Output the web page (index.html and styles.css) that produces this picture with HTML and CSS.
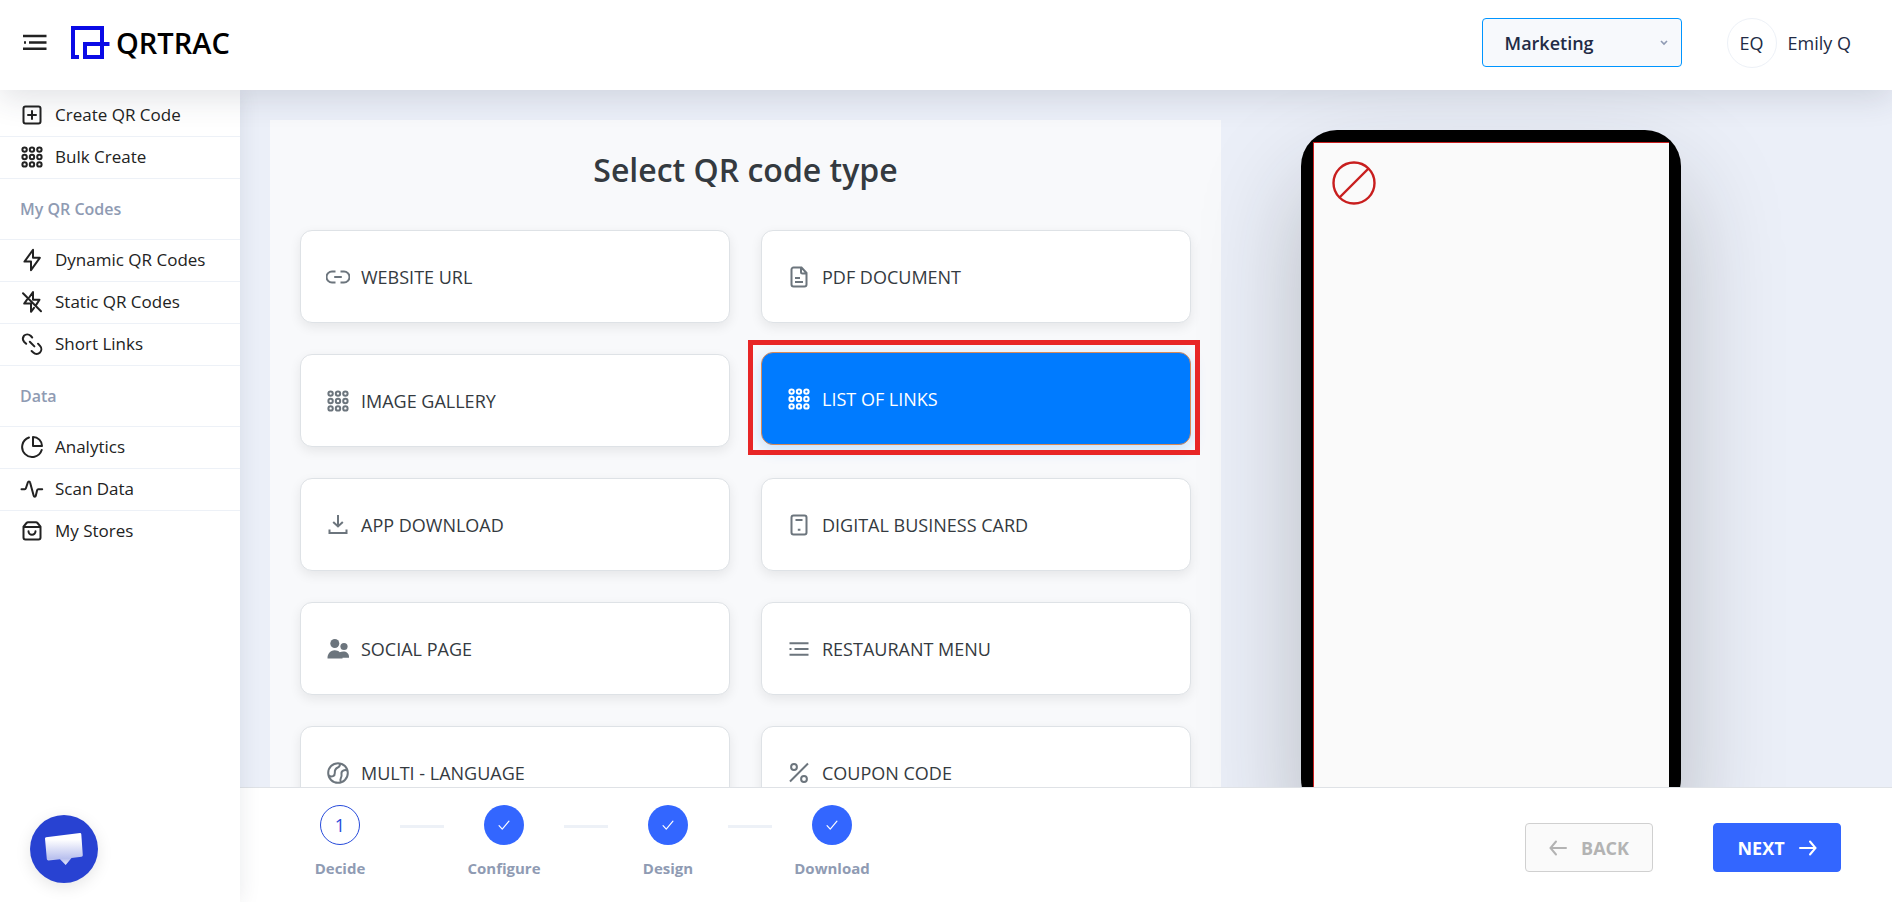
FILE: index.html
```html
<!DOCTYPE html>
<html lang="en">
<head>
  <meta charset="UTF-8">
  <title>QRTRAC - Create QR Code</title>
  <link rel="stylesheet" href="styles.css">
</head>
<body>
  <!-- shared icons -->
  <svg class="sprite" aria-hidden="true">
    <symbol id="i-grid" viewBox="0 0 24 24">
      <g fill="none" stroke="currentColor" stroke-width="2">
        <circle cx="4.6" cy="4.6" r="2.2"/><circle cx="12" cy="4.6" r="2.2"/><circle cx="19.4" cy="4.6" r="2.2"/>
        <circle cx="4.6" cy="12" r="2.2"/><circle cx="12" cy="12" r="2.2"/><circle cx="19.4" cy="12" r="2.2"/>
        <circle cx="4.6" cy="19.4" r="2.2"/><circle cx="12" cy="19.4" r="2.2"/><circle cx="19.4" cy="19.4" r="2.2"/>
      </g>
    </symbol>
    <symbol id="i-menu" viewBox="0 0 24 24">
      <path fill="none" stroke="currentColor" stroke-width="2" d="M2.5 6.2h19M7.5 12h14M2.5 17.8h19M2.5 12h2"/>
    </symbol>
    <symbol id="i-check" viewBox="0 0 24 24">
      <path fill="none" stroke="currentColor" stroke-width="2" stroke-linecap="round" stroke-linejoin="round" d="M3.5 13l5.500 6L20.500 5.500"/>
    </symbol>
  </svg>

  <header class="topbar">
    <button class="menu-toggle" type="button" aria-label="Toggle menu">
      <svg viewBox="0 0 24 18"><path fill="none" stroke="currentColor" stroke-width="2.400" d="M0 2h23.500M6 8.500h17.500M0 14.800h23.500M1 8.500h2"/></svg>
    </button>
    <a class="brand" href="#">
      <svg viewBox="0 0 40 36"><path fill="none" stroke="currentColor" stroke-width="4" d="M9 32H3V3h29v29H15V19h24.500"/></svg>
      <span>QRTRAC</span>
    </a>
    <div class="workspace">
      <select aria-label="Workspace">
        <option>Marketing</option>
      </select>
      <svg viewBox="0 0 8 6"><path fill="none" stroke="currentColor" stroke-width="1.600" d="M1 1l3 3 3-3"/></svg>
    </div>
    <a class="user" href="#">
      <span class="avatar">EQ</span>
      <span>Emily Q</span>
    </a>
  </header>

  <div class="layout">
    <nav class="sidebar">
      <ul>
        <li><a href="#">
          <svg viewBox="0 0 24 24"><rect x="3.500" y="3.500" width="17" height="17" rx="2"/><path d="M12 8v8M8 12h8"/></svg>
          Create QR Code</a></li>
        <li><a href="#"><svg><use href="#i-grid"/></svg>Bulk Create</a></li>
        <li class="heading">My QR Codes</li>
        <li><a href="#">
          <svg viewBox="0 0 24 24"><path d="M13 1.800L4.500 13.600H11V22.200L19.800 9.800H13z"/></svg>
          Dynamic QR Codes</a></li>
        <li><a href="#">
          <svg viewBox="0 0 24 24"><path d="M9.500 7l3.500-5v7.800h6.500l-3 4.600M7 9.600l-2.800 4H11v8.200l3-4M3 3.200l18 18"/></svg>
          Static QR Codes</a></li>
        <li><a href="#">
          <svg viewBox="0 0 24 24"><path d="M6.200 11.800L4 9.700A4.900 4.900 0 0 1 3.900 3.800a4.900 4.900 0 0 1 6.700 0l1.600 1.700M9.800 9.800l4.600 4.600M18 11.700l2 2.200a4.900 4.900 0 0 1 0 6.700 4.900 4.900 0 0 1-6.700 0L11.600 19"/></svg>
          Short Links</a></li>
        <li class="heading">Data</li>
        <li><a href="#">
          <svg viewBox="0 0 24 24"><path d="M9 2.500A10 10 0 1 0 21.700 15M13 2v9h9a9 9 0 0 0-9-9z"/></svg>
          Analytics</a></li>
        <li><a href="#">
          <svg viewBox="0 0 24 24"><path d="M1.500 12.300h3.200c.6 0 1-.4 1.200-1l2-6c.4-1.200 1.800-1.200 2.100 0l3.700 13.500c.3 1.200 1.800 1.200 2.100 0l1.300-5.500c.2-.7.600-1 1.200-1h3.900"/></svg>
          Scan Data</a></li>
        <li><a href="#">
          <svg viewBox="0 0 24 24"><path d="M3.500 7.700L6.500 4q.6-.7 1.500-.7h8q.9 0 1.500.7l3 3.700v10.800a2 2 0 0 1-2 2h-13a2 2 0 0 1-2-2zM3.500 8h17M8.500 12.300a3.500 3.500 0 0 0 7 0"/></svg>
          My Stores</a></li>
      </ul>
      <button class="chat" type="button" aria-label="Open chat">
        <svg viewBox="0 0 40 34">
          <defs>
            <linearGradient id="bubble" x1="0" y1="0" x2="0" y2="1">
              <stop offset=".2" stop-color="#fff"/>
              <stop offset=".8" stop-color="#b9c0ee"/>
              <stop offset="1" stop-color="#e4e7fa"/>
            </linearGradient>
          </defs>
          <path fill="url(#bubble)" d="M2 5.200L36 1q1.200 0 1.300 1.200l1.500 21q0 1.400-1.300 1.500L27.500 26 21.700 33 16 27.200 4.400 28.400Q3 28.400 2.800 27L1 6.600Q1 5.400 2 5.200z"/>
        </svg>
      </button>
    </nav>

    <div class="main">
      <main class="content">
        <section class="panel">
          <h1>Select QR code type</h1>
          <div class="types">
            <button class="type" type="button">
              <svg viewBox="0 0 24 24"><path d="M9.500 6.500H6a5.300 5.300 0 0 0 0 11h3.500M14.500 6.500H18a5.300 5.300 0 0 1 0 11h-3.500M8.200 12h7.600"/></svg>
              WEBSITE URL
            </button>
            <button class="type" type="button">
              <svg viewBox="0 0 24 24"><path d="M14.500 2.500h-8a2 2 0 0 0-2 2v15a2 2 0 0 0 2 2h11a2 2 0 0 0 2-2V8zM14 2.500V7q0 1.500 1.500 1.500h4M8 13h5M8 17h8"/></svg>
              PDF DOCUMENT
            </button>
            <button class="type" type="button">
              <svg><use href="#i-grid"/></svg>
              IMAGE GALLERY
            </button>
            <button class="type selected" type="button">
              <svg><use href="#i-grid"/></svg>
              LIST OF LINKS
              <span class="marker"></span>
            </button>
            <button class="type" type="button">
              <svg viewBox="0 0 24 24"><path d="M12 2v11M7.200 9l4.800 4.500L16.800 9M3.500 16.500V20h17v-3.500"/></svg>
              APP DOWNLOAD
            </button>
            <button class="type" type="button">
              <svg viewBox="0 0 24 24"><rect x="4.500" y="2.500" width="15" height="19" rx="2"/><path d="M8.500 7h7M10.800 16.800h2.600" /></svg>
              DIGITAL BUSINESS CARD
            </button>
            <button class="type" type="button">
              <svg class="solid" viewBox="0 0 24 24"><circle cx="8.800" cy="6.500" r="4.500"/><circle cx="18" cy="9.500" r="3.600"/><path d="M1.500 21.500C1.500 17 4 13.300 8.700 13.300c2 0 3.800.7 5 1.900 5-2 9.300.3 9.300 4.300v1.200h-6.500v.8z"/></svg>
              SOCIAL PAGE
            </button>
            <button class="type" type="button">
              <svg><use href="#i-menu"/></svg>
              RESTAURANT MENU
            </button>
            <button class="type" type="button">
              <svg viewBox="0 0 24 24"><circle cx="12" cy="12" r="9.800"/><path d="M2.500 14.500c3.500 2 6.500.5 6.300-2.500-.2-3 .4-4.400 3-5.500 2-.9 2.500-2 2-4M21.500 9.500c-3-1.200-6.500.3-6 3.500.3 1.700.3 2.500-.6 4-.8 1.400-.8 2.700.1 4"/></svg>
              MULTI - LANGUAGE
            </button>
            <button class="type" type="button">
              <svg viewBox="0 0 24 24"><circle cx="7" cy="6" r="2.900"/><circle cx="17" cy="18" r="2.900"/><path d="M21 2.500l-18 18"/></svg>
              COUPON CODE
            </button>
          </div>
        </section>
        <aside class="preview">
          <div class="phone">
            <div class="screen">
              <svg viewBox="0 0 44 44"><circle cx="22" cy="22" r="20.500"/><path d="M7.500 36.500l29-29"/></svg>
            </div>
          </div>
        </aside>
      </main>

      <footer class="wizard">
        <ol class="steps">
          <li class="step current"><span class="dot">1</span>Decide</li>
          <li class="line"></li>
          <li class="step"><span class="dot"><svg><use href="#i-check"/></svg></span>Configure</li>
          <li class="line"></li>
          <li class="step"><span class="dot"><svg><use href="#i-check"/></svg></span>Design</li>
          <li class="line"></li>
          <li class="step"><span class="dot"><svg><use href="#i-check"/></svg></span>Download</li>
        </ol>
        <div class="actions">
          <button class="btn" type="button" disabled>
            <svg viewBox="0 0 18 16"><path d="M17 8H2M7 1.500L1.500 8 7 14.500"/></svg>
            BACK
          </button>
          <button class="btn next" type="button">
            NEXT
            <svg viewBox="0 0 18 16"><path d="M1 8h15M11 1.500L16.500 8 11 14.500"/></svg>
          </button>
        </div>
      </footer>
    </div>
  </div>
</body>
</html>
```
FILE: styles.css
```css
* {
  box-sizing: border-box;
}
body {
  margin: 0;
  height: 100vh;
  display: flex;
  flex-direction: column;
  overflow: hidden;
  background: #ebeff8;
  font-family: "Open Sans", "Noto Sans", sans-serif;
  font-size: 18px;
  color: #222b45;
}
button,
select {
  font: inherit;
  cursor: pointer;
}
a {
  color: inherit;
  text-decoration: none;
}
ul,
ol {
  list-style: none;
  margin: 0;
  padding: 0;
}
.sprite {
  display: none;
}

/* top bar */
.topbar {
  position: relative;
  z-index: 3;
  display: flex;
  align-items: center;
  height: 90px;
  flex: none;
  padding: 0 41px 5px 23px;
  background: #fff;
  box-shadow: 0 8px 32px rgba(44, 51, 73, 0.14);
}
.menu-toggle {
  padding: 0;
  border: 0;
  background: none;
  color: #222;
  display: flex;
}
.menu-toggle svg {
  width: 24px;
  height: 18px;
}
.brand {
  display: flex;
  align-items: center;
  gap: 6px;
  margin-left: 23px;
  color: #000;
  font-size: 29px;
  font-weight: 600;
}
.brand svg {
  width: 40px;
  height: 36px;
  color: #0a0ae6;
}
.workspace {
  position: relative;
  margin-left: auto;
}
.workspace select {
  appearance: none;
  width: 200px;
  height: 49px;
  padding: 0 22px;
  border: 1px solid #0095ff;
  border-radius: 4px;
  background: #f7f9fc;
  color: #222b45;
  font-weight: 600;
}
.workspace svg {
  position: absolute;
  right: 14px;
  top: 22px;
  width: 8px;
  height: 6px;
  color: #8f9bb3;
  pointer-events: none;
}
.user {
  display: flex;
  align-items: center;
  gap: 11px;
  margin-left: 45px;
}
.avatar {
  width: 50px;
  height: 50px;
  display: flex;
  align-items: center;
  justify-content: center;
  border: 1px solid #edf1f7;
  border-radius: 50%;
}

/* sidebar */
.layout {
  display: flex;
  flex: 1;
  min-height: 0;
}
.sidebar {
  position: relative;
  z-index: 2;
  width: 240px;
  flex: none;
  display: flex;
  flex-direction: column;
  justify-content: space-between;
  padding: 5px 0 19px;
  background: #fff;
  box-shadow: 0 0 20px rgba(44, 51, 73, 0.1);
  color: #222;
  font-size: 17px;
}
.sidebar li {
  border-bottom: 1px solid #edf1f7;
}
.sidebar li:last-child {
  border-bottom: 0;
}
.sidebar a {
  display: flex;
  align-items: center;
  gap: 11px;
  height: 41px;
  padding: 0 20px 2px;
}
.sidebar a svg {
  width: 24px;
  height: 24px;
  fill: none;
  stroke: currentColor;
  stroke-width: 2;
  stroke-linecap: round;
  stroke-linejoin: round;
}
.sidebar .heading {
  height: 61px;
  padding: 0 20px;
  line-height: 60px;
  color: #8f9bb3;
  font-size: 16px;
  font-weight: 600;
}
.chat {
  width: 68px;
  height: 68px;
  margin-left: 30px;
  display: flex;
  align-items: center;
  justify-content: center;
  border: 0;
  border-radius: 50%;
  background: #2842d2;
  box-shadow: 0 4px 16px rgba(0, 0, 0, 0.1);
}
.chat svg {
  width: 40px;
  height: 34px;
}

/* content */
.main {
  flex: 1;
  min-width: 0;
  display: flex;
  flex-direction: column;
}
.content {
  flex: 1;
  min-height: 0;
  overflow: hidden;
  display: grid;
  grid-template-columns: 3fr 2fr;
  align-items: start;
  padding: 30px 37px 0 30px;
}
.panel {
  padding: 30px;
  background: #f8f9fb;
}
.panel h1 {
  margin: 0 0 40px;
  color: #343a40;
  font-size: 32px;
  font-weight: 600;
  line-height: 40px;
  text-align: center;
}
.types {
  display: grid;
  grid-template-columns: 1fr 1fr;
  gap: 31px;
}
.type {
  position: relative;
  display: flex;
  align-items: center;
  gap: 11px;
  height: 93px;
  padding: 0 25px;
  border: 1px solid #dee2e6;
  border-radius: 12px;
  background: #fff;
  box-shadow: 0 4px 12px rgba(0, 0, 0, 0.08);
  color: #343a40;
}
.type svg {
  width: 24px;
  height: 24px;
  fill: none;
  stroke: currentColor;
  stroke-width: 2;
  color: #6c757d;
}
.type .solid {
  fill: currentColor;
  stroke: none;
}
.type.selected {
  transform: translateY(-2px);
  border-color: #d98a57;
  background: #007bff;
  box-shadow: 0 4px 16px rgba(0, 123, 255, 0.2);
  color: #fff;
}
.type.selected svg {
  color: #fff;
}
.marker {
  position: absolute;
  inset: -13px -10px -11px -14px;
  border: 5px solid #e82626;
}

/* phone preview */
.preview {
  padding-left: 80px;
}
.phone {
  max-width: 380px;
  height: 685px;
  margin-top: 10px;
  padding: 12px;
  border-radius: 36px;
  background: #000;
  box-shadow: 0 50px 100px rgba(30, 35, 40, 0.25);
}
.screen {
  height: 100%;
  padding: 18px;
  border-top: 1px solid #c81e1e;
  border-left: 1px solid #c81e1e;
  background: #fafafa;
}
.screen svg {
  width: 44px;
  height: 44px;
  fill: none;
  stroke: #c81e1e;
  stroke-width: 2.4;
}

/* wizard footer */
.wizard {
  display: flex;
  align-items: flex-start;
  justify-content: space-between;
  height: 115px;
  flex: none;
  padding: 17px 51px 0 40px;
  border-top: 1px solid #dfe2e6;
  background: #fff;
}
.steps {
  display: flex;
}
.step {
  width: 120px;
  display: flex;
  flex-direction: column;
  align-items: center;
  gap: 12px;
  color: #8f9bb3;
  font-size: 15px;
  font-weight: 700;
  line-height: 22px;
}
.dot {
  width: 40px;
  height: 40px;
  display: flex;
  align-items: center;
  justify-content: center;
  border-radius: 50%;
  background: #3366ff;
  color: #fff;
  font-size: 18px;
  font-weight: 400;
}
.dot svg {
  width: 14px;
  height: 14px;
}
.current .dot {
  border: 1px solid #274bdb;
  background: #fff;
  color: #274bdb;
}
.line {
  width: 44px;
  height: 3px;
  margin-top: 20px;
  background: #edf1f7;
}
.actions {
  display: flex;
  gap: 60px;
  padding-top: 18px;
}
.btn {
  width: 128px;
  height: 49px;
  display: flex;
  align-items: center;
  justify-content: center;
  gap: 14px;
  border: 1px solid #d0d0d0;
  border-radius: 4px;
  background: #fafafa;
  color: #b3b3b3;
  font-weight: 700;
}
.btn svg {
  width: 18px;
  height: 16px;
  fill: none;
  stroke: currentColor;
  stroke-width: 2;
  stroke-linecap: round;
}
.btn.next {
  border-color: #3366ff;
  background: #3366ff;
  color: #fff;
}
```
